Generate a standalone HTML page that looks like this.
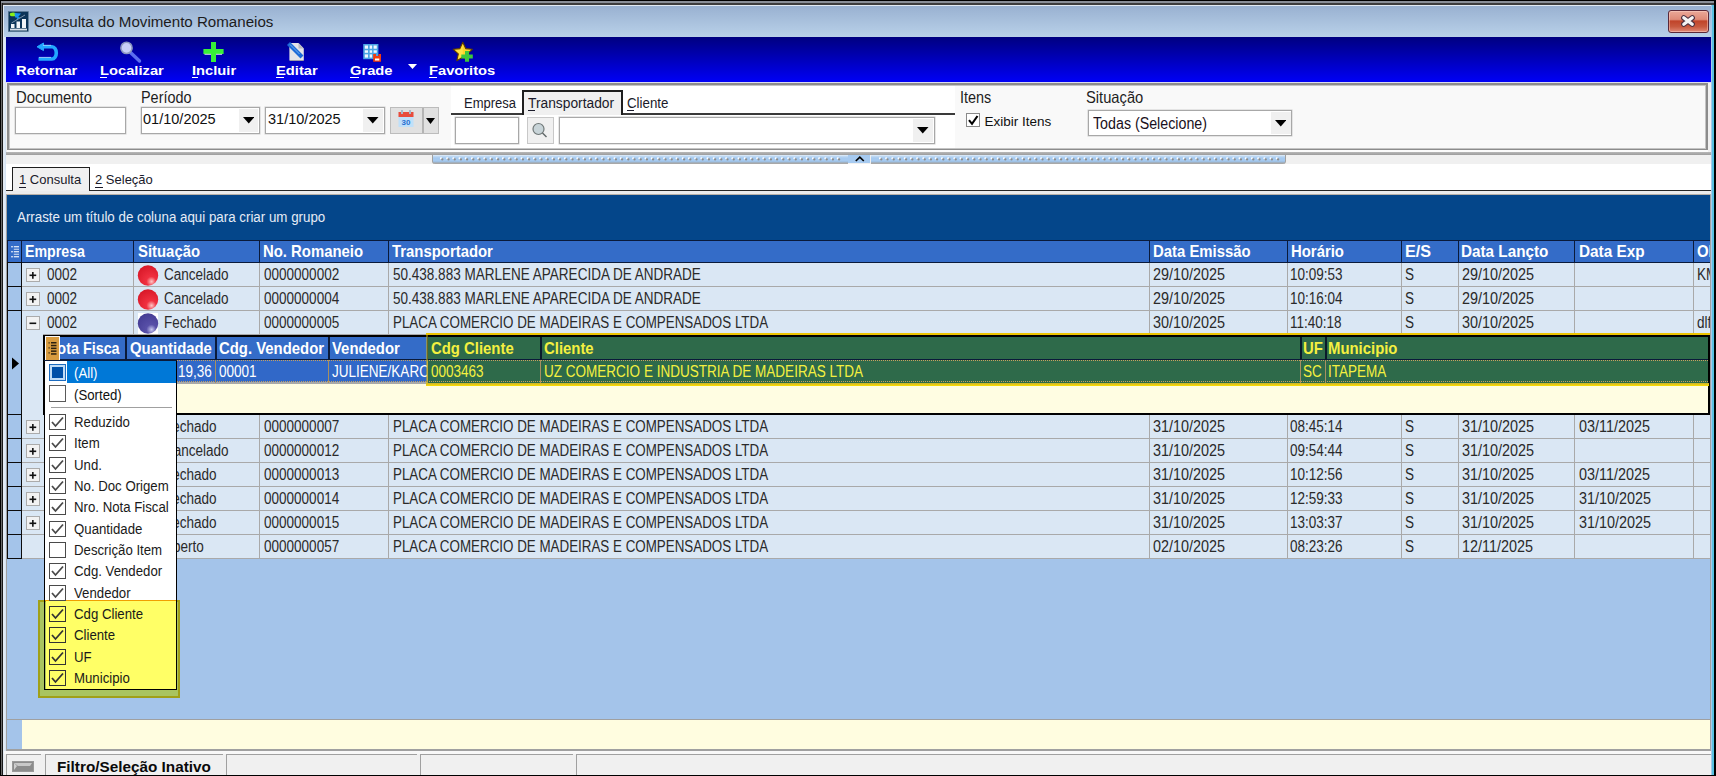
<!DOCTYPE html><html><head><meta charset="utf-8"><style>
*{margin:0;padding:0;box-sizing:border-box}
html,body{width:1716px;height:776px;overflow:hidden;background:#000}
body{position:relative;font-family:"Liberation Sans",sans-serif}
body div{position:absolute}
.t{line-height:20px;height:20px;white-space:nowrap;transform-origin:0 0}
.clip{overflow:hidden}
</style></head><body><div style="left:0px;top:0px;width:1716px;height:776px;background:#000"></div>
<div style="left:1px;top:1px;width:1713px;height:2px;background:#8a8f98"></div>
<div style="left:1px;top:3px;width:1713px;height:2px;background:#3c3c3c"></div>
<div style="left:1px;top:3px;width:1px;height:772px;background:#6a6a6a"></div>
<div style="left:2px;top:3px;width:1px;height:772px;background:#1a1a1a"></div>
<div style="left:3px;top:5px;width:1708px;height:770px;background:#e2eaf3"></div>
<div style="left:1711px;top:5px;width:1px;height:770px;background:#a8c8e8"></div>
<div style="left:1712px;top:5px;width:2px;height:770px;background:#58c0e0"></div>
<div style="left:4px;top:6px;width:1707px;height:31px;background:linear-gradient(#99b1d1,#b9d1e9)"></div>
<svg style="position:absolute;left:8px;top:11px;" width="21" height="21" viewBox="0 0 21 21"><rect x="0.3" y="0.6" width="20" height="20" fill="#0b3458" stroke="#5a7890" stroke-width="0.6"/><ellipse cx="5.2" cy="3.4" rx="3.4" ry="1.9" fill="#88f018"/><path d="M6.5 2 L13 2.6 L10.2 6 L12.2 6.3 L8.2 9.5 L9.3 6.8 L7.2 6.6 Z" fill="#1890f0"/><line x1="3.5" y1="12" x2="17" y2="4" stroke="#7890a8" stroke-width="1"/><rect x="3" y="13" width="3.5" height="4" fill="#f0f4f8"/><rect x="8.5" y="10.5" width="3.5" height="6.5" fill="#f0f4f8"/><rect x="14" y="8" width="4" height="9" fill="#f0f4f8"/><rect x="2" y="17.6" width="17" height="1.9" fill="#d8e0e8"/></svg>
<div class="t" style="left:34px;top:12px;font-size:15.5px;color:#1c1c1c;transform:scaleX(0.975);">Consulta do Movimento Romaneios</div>
<div style="left:1668px;top:10px;width:41px;height:23px;border:1px solid #5a2838;border-radius:3px;background:linear-gradient(#eaa898 0%,#de8a78 40%,#c0442a 48%,#c85a40 75%,#e08a78 100%);box-shadow:inset 0 0 0 1px rgba(255,220,210,.45)"></div>
<svg style="position:absolute;left:1679px;top:14px;" width="18" height="15" viewBox="0 0 18 15"><path d="M4.8 3.8 L13.2 10.2 M13.2 3.8 L4.8 10.2" stroke="#4a3040" stroke-width="5.4" stroke-linecap="round"/><path d="M4.8 3.8 L13.2 10.2 M13.2 3.8 L4.8 10.2" stroke="#f4f4f4" stroke-width="3.3" stroke-linecap="round"/></svg>
<div style="left:6px;top:37px;width:1705px;height:45px;background:linear-gradient(#000080,#0000f6)"></div>
<div style="left:6px;top:82px;width:1705px;height:1px;background:#dcdcf0"></div>
<div style="left:4px;top:83px;width:1707px;height:692px;background:#f0f0f0"></div>
<div style="left:4px;top:37px;width:2px;height:738px;background:linear-gradient(90deg,#e8eef6,#cfe0f2)"></div>
<div class="t" style="left:15.5px;top:61px;font-size:13.5px;font-weight:bold;color:#fff;transform:scaleX(1.09);">Retornar</div>
<div class="t" style="left:99.5px;top:61px;font-size:13.5px;font-weight:bold;color:#fff;transform:scaleX(1.09);">Localizar</div>
<div style="left:100px;top:77px;width:7px;height:1px;background:#fff"></div>
<div class="t" style="left:191.5px;top:61px;font-size:13.5px;font-weight:bold;color:#fff;transform:scaleX(1.09);">Incluir</div>
<div style="left:192px;top:77px;width:6px;height:1px;background:#fff"></div>
<div class="t" style="left:275.5px;top:61px;font-size:13.5px;font-weight:bold;color:#fff;transform:scaleX(1.09);">Editar</div>
<div style="left:276px;top:77px;width:8px;height:1px;background:#fff"></div>
<div class="t" style="left:349.5px;top:61px;font-size:13.5px;font-weight:bold;color:#fff;transform:scaleX(1.09);">Grade</div>
<div style="left:350px;top:77px;width:9px;height:1px;background:#fff"></div>
<div class="t" style="left:429px;top:61px;font-size:13.5px;font-weight:bold;color:#fff;transform:scaleX(1.09);">Favoritos</div>
<div style="left:429px;top:77px;width:8px;height:1px;background:#fff"></div>
<svg style="position:absolute;left:30px;top:38px;" width="32" height="26" viewBox="0 0 32 26"><path d="M12.5 8.8 H22 A4.3 6.1 0 0 1 22 21 H8.5" fill="none" stroke="#22a8ff" stroke-width="3.6"/><path d="M7 8.8 L13.5 5 L13.5 12.6 Z" fill="#22a8ff" stroke="#22a8ff" stroke-width="1" stroke-linejoin="round"/><path d="M13 7.3 H21" stroke="#c8e4ff" stroke-width="0.9" opacity=".8"/><path d="M9 19.4 H21" stroke="#c8e4ff" stroke-width="0.9" opacity=".8"/></svg>
<svg style="position:absolute;left:110px;top:38px;" width="34" height="26" viewBox="0 0 34 26"><line x1="20.5" y1="14.5" x2="29.5" y2="23" stroke="#5c6ef0" stroke-width="3.4" stroke-linecap="round"/><circle cx="16.5" cy="9.9" r="5.6" fill="#c8d0f8" stroke="#8c98c0" stroke-width="1.6"/></svg>
<svg style="position:absolute;left:194px;top:38px;" width="32" height="26" viewBox="0 0 32 26"><path d="M17 4 H22 V11 H29.6 V16.1 H22 V24 H17 V16.1 H9.4 V11 H17 Z" fill="#38f038"/><path d="M10.5 16.3 H17 M22 16.3 H28" stroke="#d8e0f0" stroke-width="1.3" opacity=".8"/></svg>
<svg style="position:absolute;left:280px;top:38px;" width="32" height="26" viewBox="0 0 32 26"><path d="M9.4 5 H18.5 L23.8 10.5 V22 H9.4 Z" fill="#e4e4e8"/><path d="M18.5 5 V10.5 H23.8 Z" fill="#b8b8c0"/><path d="M9.5 22 H23.8 V23 H9.5Z" fill="#9a9aa8"/><line x1="10" y1="7" x2="20.5" y2="17.5" stroke="#1c6ad8" stroke-width="4.2" stroke-linecap="square"/><line x1="10" y1="6.5" x2="19.5" y2="16" stroke="#70b0f0" stroke-width="1" /></svg>
<svg style="position:absolute;left:356px;top:38px;" width="32" height="26" viewBox="0 0 32 26"><rect x="7.2" y="6" width="15.2" height="15.2" fill="#4aa4e4"/><g fill="#f0f8ff"><rect x="8.8" y="7.5" width="3.2" height="3.2"/><rect x="13.7" y="7.5" width="2.4" height="3.2"/><rect x="17.6" y="7.5" width="3.2" height="3.2"/><rect x="8.8" y="12.3" width="3.2" height="2.5"/><rect x="13.7" y="12.3" width="2.4" height="2.5"/><rect x="17.6" y="12.3" width="3.2" height="2.5"/><rect x="8.8" y="16.4" width="3.2" height="3.2"/><rect x="13.7" y="16.4" width="2.4" height="3.2"/></g><path d="M17.2 16 H20 V18 H22.5 V16 H25 V23.8 H17.2 Z" fill="#f43c0c"/><rect x="19" y="20.5" width="4.3" height="2" fill="#fff"/></svg>
<svg style="position:absolute;left:408px;top:64px;" width="10" height="7" viewBox="0 0 10 7"><path d="M0 0 H9 L4.5 5 Z" fill="#fff"/></svg>
<svg style="position:absolute;left:444px;top:38px;" width="34" height="26" viewBox="0 0 34 26"><path d="M18.8 4.2 L21.7 10.6 L28.4 11.3 L23.3 15.9 L24.8 22.7 L18.8 19.3 L12.8 22.7 L14.3 15.9 L9.2 11.3 L15.9 10.6 Z" fill="#ffd428" stroke="#5a3a00" stroke-width="1.1" stroke-linejoin="round"/><path d="M18.8 6.5 L16.5 11.8 L11.5 12.3 L15.3 15.7 L14.2 20.8 L18.8 18 Z" fill="#fff060" opacity=".5"/><path d="M21 13 H25 V16.4 H28.8 V20.4 H25 V23.8 H21 V20.4 H17.3 V16.4 H21 Z" fill="#3cc83c"/></svg>
<div style="left:7px;top:83px;width:1701px;height:68px;background:#f9f9f9;border:2px solid #8c8c8c;box-shadow:inset 0 0 0 1px #c4c4c4"></div>
<div style="left:7px;top:150px;width:1701px;height:2px;background:#fbfbfb"></div>
<div style="left:6px;top:152px;width:1705px;height:3px;background:linear-gradient(#b8b8b8,#9c9c9c)"></div>
<div style="left:451px;top:86px;width:504px;height:62px;background:#fff"></div>
<div class="t" style="left:15.5px;top:87px;font-size:16.5px;color:#1e1e1e;transform:scaleX(0.9);">Documento</div>
<div class="t" style="left:140.5px;top:87px;font-size:16.5px;color:#1e1e1e;transform:scaleX(0.874);">Período</div>
<div class="t" style="left:960px;top:87px;font-size:16.5px;color:#1e1e1e;transform:scaleX(0.874);">Itens</div>
<div class="t" style="left:1085.5px;top:87px;font-size:16.5px;color:#1e1e1e;transform:scaleX(0.892);">Situação</div>
<div style="left:15px;top:107px;width:111px;height:27px;background:#fff;border:1px solid #a8a8a8;box-shadow:0 0 0 0.5px #d0d0d0"></div>
<div style="left:141px;top:107px;width:119px;height:27px;background:#fff;border:1px solid #a8a8a8;box-shadow:0 0 0 0.5px #d0d0d0"></div>
<div style="left:239px;top:109px;width:19px;height:23px;background:#f0f0f0"></div>
<svg style="position:absolute;left:242.75px;top:117.05px;" width="11.5" height="6.5" viewBox="0 0 11.5 6.5"><path d="M0 0 H11.5 L5.75 6.5 Z" fill="#000"/></svg>
<div class="t" style="left:142.7px;top:109px;font-size:15.5px;color:#101010;transform:scaleX(0.937);">01/10/2025</div>
<div style="left:265px;top:107px;width:120px;height:27px;background:#fff;border:1px solid #a8a8a8;box-shadow:0 0 0 0.5px #d0d0d0"></div>
<div style="left:363px;top:109px;width:20px;height:23px;background:#f0f0f0"></div>
<svg style="position:absolute;left:367.25px;top:117.05px;" width="11.5" height="6.5" viewBox="0 0 11.5 6.5"><path d="M0 0 H11.5 L5.75 6.5 Z" fill="#000"/></svg>
<div class="t" style="left:268px;top:109px;font-size:15.5px;color:#101010;transform:scaleX(0.937);">31/10/2025</div>
<div style="left:390px;top:107px;width:49px;height:27px;background:#e1e1e1;border:1px solid #bcbcbc"></div>
<div style="left:422px;top:108px;width:2px;height:25px;background:#b4b4b4"></div>
<svg style="position:absolute;left:398px;top:110px;" width="17" height="19" viewBox="0 0 17 19"><rect x="0.5" y="2" width="15" height="5" fill="#e84c3c"/><rect x="0.5" y="7" width="15" height="10" fill="#bfe0fa"/><rect x="3" y="0" width="2" height="4" fill="#a8b8c8"/><rect x="11" y="0" width="2" height="4" fill="#a8b8c8"/><text x="8" y="15" font-family="Liberation Sans" font-weight="bold" font-size="8" fill="#2a70d0" text-anchor="middle">30</text></svg>
<svg style="position:absolute;left:426.0px;top:118.0px;" width="9" height="6" viewBox="0 0 9 6"><path d="M0 0 H9 L4.5 6 Z" fill="#000"/></svg>
<div style="left:451px;top:113px;width:504px;height:2px;background:#3a3a3a"></div>
<div style="left:522px;top:90px;width:101px;height:25px;background:#f0f0f0;border:2px solid #1e1e1e;border-bottom:none"></div>
<div class="t" style="left:463.5px;top:93px;font-size:14px;color:#1a1a2a;transform:scaleX(0.93);">Empresa</div>
<div class="t" style="left:528px;top:93px;font-size:14px;color:#1a1a2a;transform:scaleX(0.985);">Transportador</div>
<div style="left:528px;top:110px;width:7px;height:1px;background:#1a1a2a"></div>
<div class="t" style="left:627px;top:93px;font-size:14px;color:#1a1a2a;transform:scaleX(0.95);">Cliente</div>
<div style="left:627px;top:110px;width:7px;height:1px;background:#1a1a2a"></div>
<div style="left:455px;top:117px;width:64px;height:27px;background:#fff;border:1px solid #a8a8a8;box-shadow:0 0 0 0.5px #d0d0d0"></div>
<div style="left:527px;top:117px;width:27px;height:27px;background:#f0f0f0;border:1px solid #c8c8c8"></div>
<svg style="position:absolute;left:529px;top:120px;" width="22" height="22" viewBox="0 0 22 22"><circle cx="9.5" cy="9" r="5.5" fill="#c8d4d8" stroke="#707878" stroke-width="1.2"/><line x1="13.5" y1="13" x2="17.5" y2="17" stroke="#606868" stroke-width="1.5"/></svg>
<div style="left:559px;top:117px;width:376px;height:27px;background:#fff;border:1px solid #a8a8a8;box-shadow:0 0 0 0.5px #d0d0d0"></div>
<div style="left:913px;top:119px;width:20px;height:23px;background:#f0f0f0"></div>
<svg style="position:absolute;left:917.0px;top:127.25px;" width="11.5" height="6.5" viewBox="0 0 11.5 6.5"><path d="M0 0 H11.5 L5.75 6.5 Z" fill="#000"/></svg>
<div style="left:966px;top:113px;width:14px;height:14px;background:#fff;border:1px solid #8a8a8a"></div>
<svg style="position:absolute;left:966px;top:113px;" width="14" height="14" viewBox="0 0 14 14"><path d="M3 7.2 L6 10.8 L11.5 3" fill="none" stroke="#000" stroke-width="2.1"/></svg>
<div class="t" style="left:984.5px;top:112px;font-size:13.5px;color:#101010;">Exibir Itens</div>
<div style="left:1088px;top:110px;width:204px;height:26px;background:#fff;border:1px solid #a8a8a8;box-shadow:0 0 0 0.5px #d0d0d0"></div>
<div style="left:1271px;top:112px;width:20px;height:22px;background:#f0f0f0"></div>
<svg style="position:absolute;left:1274.85px;top:120.05px;" width="11.5" height="6.5" viewBox="0 0 11.5 6.5"><path d="M0 0 H11.5 L5.75 6.5 Z" fill="#000"/></svg>
<div class="t" style="left:1093px;top:114px;font-size:16px;color:#1a1020;transform:scaleX(0.89);">Todas (Selecione)</div>
<div style="left:432px;top:152px;width:854px;height:3px;background:linear-gradient(#b8b8b8,#9c9c9c)"></div>
<div style="left:432px;top:155px;width:416px;height:9px;background:linear-gradient(#eaf2fa 0,#c4dcf4 1px,#a6caf0 3px,#a6caf0 6px,#98b8d8 7px,#a8a8a8 8px);border-left:1px solid #a0a0a0;border-radius:0 0 0 3px"></div>
<svg style="position:absolute;left:432px;top:155px;" width="416" height="9" viewBox="0 0 416 9"><circle cx="9.0" cy="3.3" r="1.1" fill="#fff"/><circle cx="10.3" cy="4.4" r="1.15" fill="#8c8c8c"/><circle cx="15.2" cy="3.3" r="1.1" fill="#fff"/><circle cx="16.5" cy="4.4" r="1.15" fill="#8c8c8c"/><circle cx="21.4" cy="3.3" r="1.1" fill="#fff"/><circle cx="22.7" cy="4.4" r="1.15" fill="#8c8c8c"/><circle cx="27.6" cy="3.3" r="1.1" fill="#fff"/><circle cx="28.9" cy="4.4" r="1.15" fill="#8c8c8c"/><circle cx="33.8" cy="3.3" r="1.1" fill="#fff"/><circle cx="35.1" cy="4.4" r="1.15" fill="#8c8c8c"/><circle cx="40.0" cy="3.3" r="1.1" fill="#fff"/><circle cx="41.3" cy="4.4" r="1.15" fill="#8c8c8c"/><circle cx="46.2" cy="3.3" r="1.1" fill="#fff"/><circle cx="47.5" cy="4.4" r="1.15" fill="#8c8c8c"/><circle cx="52.4" cy="3.3" r="1.1" fill="#fff"/><circle cx="53.7" cy="4.4" r="1.15" fill="#8c8c8c"/><circle cx="58.6" cy="3.3" r="1.1" fill="#fff"/><circle cx="59.9" cy="4.4" r="1.15" fill="#8c8c8c"/><circle cx="64.8" cy="3.3" r="1.1" fill="#fff"/><circle cx="66.1" cy="4.4" r="1.15" fill="#8c8c8c"/><circle cx="71.0" cy="3.3" r="1.1" fill="#fff"/><circle cx="72.3" cy="4.4" r="1.15" fill="#8c8c8c"/><circle cx="77.2" cy="3.3" r="1.1" fill="#fff"/><circle cx="78.5" cy="4.4" r="1.15" fill="#8c8c8c"/><circle cx="83.4" cy="3.3" r="1.1" fill="#fff"/><circle cx="84.7" cy="4.4" r="1.15" fill="#8c8c8c"/><circle cx="89.6" cy="3.3" r="1.1" fill="#fff"/><circle cx="90.9" cy="4.4" r="1.15" fill="#8c8c8c"/><circle cx="95.8" cy="3.3" r="1.1" fill="#fff"/><circle cx="97.1" cy="4.4" r="1.15" fill="#8c8c8c"/><circle cx="102.0" cy="3.3" r="1.1" fill="#fff"/><circle cx="103.3" cy="4.4" r="1.15" fill="#8c8c8c"/><circle cx="108.2" cy="3.3" r="1.1" fill="#fff"/><circle cx="109.5" cy="4.4" r="1.15" fill="#8c8c8c"/><circle cx="114.4" cy="3.3" r="1.1" fill="#fff"/><circle cx="115.7" cy="4.4" r="1.15" fill="#8c8c8c"/><circle cx="120.6" cy="3.3" r="1.1" fill="#fff"/><circle cx="121.9" cy="4.4" r="1.15" fill="#8c8c8c"/><circle cx="126.8" cy="3.3" r="1.1" fill="#fff"/><circle cx="128.1" cy="4.4" r="1.15" fill="#8c8c8c"/><circle cx="133.0" cy="3.3" r="1.1" fill="#fff"/><circle cx="134.3" cy="4.4" r="1.15" fill="#8c8c8c"/><circle cx="139.2" cy="3.3" r="1.1" fill="#fff"/><circle cx="140.5" cy="4.4" r="1.15" fill="#8c8c8c"/><circle cx="145.4" cy="3.3" r="1.1" fill="#fff"/><circle cx="146.7" cy="4.4" r="1.15" fill="#8c8c8c"/><circle cx="151.6" cy="3.3" r="1.1" fill="#fff"/><circle cx="152.9" cy="4.4" r="1.15" fill="#8c8c8c"/><circle cx="157.8" cy="3.3" r="1.1" fill="#fff"/><circle cx="159.1" cy="4.4" r="1.15" fill="#8c8c8c"/><circle cx="164.0" cy="3.3" r="1.1" fill="#fff"/><circle cx="165.3" cy="4.4" r="1.15" fill="#8c8c8c"/><circle cx="170.2" cy="3.3" r="1.1" fill="#fff"/><circle cx="171.5" cy="4.4" r="1.15" fill="#8c8c8c"/><circle cx="176.4" cy="3.3" r="1.1" fill="#fff"/><circle cx="177.7" cy="4.4" r="1.15" fill="#8c8c8c"/><circle cx="182.6" cy="3.3" r="1.1" fill="#fff"/><circle cx="183.9" cy="4.4" r="1.15" fill="#8c8c8c"/><circle cx="188.8" cy="3.3" r="1.1" fill="#fff"/><circle cx="190.1" cy="4.4" r="1.15" fill="#8c8c8c"/><circle cx="195.0" cy="3.3" r="1.1" fill="#fff"/><circle cx="196.3" cy="4.4" r="1.15" fill="#8c8c8c"/><circle cx="201.2" cy="3.3" r="1.1" fill="#fff"/><circle cx="202.5" cy="4.4" r="1.15" fill="#8c8c8c"/><circle cx="207.4" cy="3.3" r="1.1" fill="#fff"/><circle cx="208.7" cy="4.4" r="1.15" fill="#8c8c8c"/><circle cx="213.6" cy="3.3" r="1.1" fill="#fff"/><circle cx="214.9" cy="4.4" r="1.15" fill="#8c8c8c"/><circle cx="219.8" cy="3.3" r="1.1" fill="#fff"/><circle cx="221.1" cy="4.4" r="1.15" fill="#8c8c8c"/><circle cx="226.0" cy="3.3" r="1.1" fill="#fff"/><circle cx="227.3" cy="4.4" r="1.15" fill="#8c8c8c"/><circle cx="232.2" cy="3.3" r="1.1" fill="#fff"/><circle cx="233.5" cy="4.4" r="1.15" fill="#8c8c8c"/><circle cx="238.4" cy="3.3" r="1.1" fill="#fff"/><circle cx="239.7" cy="4.4" r="1.15" fill="#8c8c8c"/><circle cx="244.6" cy="3.3" r="1.1" fill="#fff"/><circle cx="245.9" cy="4.4" r="1.15" fill="#8c8c8c"/><circle cx="250.8" cy="3.3" r="1.1" fill="#fff"/><circle cx="252.1" cy="4.4" r="1.15" fill="#8c8c8c"/><circle cx="257.0" cy="3.3" r="1.1" fill="#fff"/><circle cx="258.3" cy="4.4" r="1.15" fill="#8c8c8c"/><circle cx="263.2" cy="3.3" r="1.1" fill="#fff"/><circle cx="264.5" cy="4.4" r="1.15" fill="#8c8c8c"/><circle cx="269.4" cy="3.3" r="1.1" fill="#fff"/><circle cx="270.7" cy="4.4" r="1.15" fill="#8c8c8c"/><circle cx="275.6" cy="3.3" r="1.1" fill="#fff"/><circle cx="276.9" cy="4.4" r="1.15" fill="#8c8c8c"/><circle cx="281.8" cy="3.3" r="1.1" fill="#fff"/><circle cx="283.1" cy="4.4" r="1.15" fill="#8c8c8c"/><circle cx="288.0" cy="3.3" r="1.1" fill="#fff"/><circle cx="289.3" cy="4.4" r="1.15" fill="#8c8c8c"/><circle cx="294.2" cy="3.3" r="1.1" fill="#fff"/><circle cx="295.5" cy="4.4" r="1.15" fill="#8c8c8c"/><circle cx="300.4" cy="3.3" r="1.1" fill="#fff"/><circle cx="301.7" cy="4.4" r="1.15" fill="#8c8c8c"/><circle cx="306.6" cy="3.3" r="1.1" fill="#fff"/><circle cx="307.9" cy="4.4" r="1.15" fill="#8c8c8c"/><circle cx="312.8" cy="3.3" r="1.1" fill="#fff"/><circle cx="314.1" cy="4.4" r="1.15" fill="#8c8c8c"/><circle cx="319.0" cy="3.3" r="1.1" fill="#fff"/><circle cx="320.3" cy="4.4" r="1.15" fill="#8c8c8c"/><circle cx="325.2" cy="3.3" r="1.1" fill="#fff"/><circle cx="326.5" cy="4.4" r="1.15" fill="#8c8c8c"/><circle cx="331.4" cy="3.3" r="1.1" fill="#fff"/><circle cx="332.7" cy="4.4" r="1.15" fill="#8c8c8c"/><circle cx="337.6" cy="3.3" r="1.1" fill="#fff"/><circle cx="338.9" cy="4.4" r="1.15" fill="#8c8c8c"/><circle cx="343.8" cy="3.3" r="1.1" fill="#fff"/><circle cx="345.1" cy="4.4" r="1.15" fill="#8c8c8c"/><circle cx="350.0" cy="3.3" r="1.1" fill="#fff"/><circle cx="351.3" cy="4.4" r="1.15" fill="#8c8c8c"/><circle cx="356.2" cy="3.3" r="1.1" fill="#fff"/><circle cx="357.5" cy="4.4" r="1.15" fill="#8c8c8c"/><circle cx="362.4" cy="3.3" r="1.1" fill="#fff"/><circle cx="363.7" cy="4.4" r="1.15" fill="#8c8c8c"/><circle cx="368.6" cy="3.3" r="1.1" fill="#fff"/><circle cx="369.9" cy="4.4" r="1.15" fill="#8c8c8c"/><circle cx="374.8" cy="3.3" r="1.1" fill="#fff"/><circle cx="376.1" cy="4.4" r="1.15" fill="#8c8c8c"/><circle cx="381.0" cy="3.3" r="1.1" fill="#fff"/><circle cx="382.3" cy="4.4" r="1.15" fill="#8c8c8c"/><circle cx="387.2" cy="3.3" r="1.1" fill="#fff"/><circle cx="388.5" cy="4.4" r="1.15" fill="#8c8c8c"/><circle cx="393.4" cy="3.3" r="1.1" fill="#fff"/><circle cx="394.7" cy="4.4" r="1.15" fill="#8c8c8c"/><circle cx="399.6" cy="3.3" r="1.1" fill="#fff"/><circle cx="400.9" cy="4.4" r="1.15" fill="#8c8c8c"/><circle cx="405.8" cy="3.3" r="1.1" fill="#fff"/><circle cx="407.1" cy="4.4" r="1.15" fill="#8c8c8c"/></svg>
<div style="left:848px;top:155px;width:22px;height:8px;background:#a6caf0"></div>
<svg style="position:absolute;left:854px;top:155px;" width="12" height="8" viewBox="0 0 12 8"><path d="M1.8 6 L5.8 2.2 L9.8 6" fill="none" stroke="#000" stroke-width="1.7"/></svg>
<div style="left:871px;top:155px;width:415px;height:9px;background:linear-gradient(#eaf2fa 0,#c4dcf4 1px,#a6caf0 3px,#a6caf0 6px,#98b8d8 7px,#a8a8a8 8px);border-right:1px solid #a0a0a0;border-radius:0 0 3px 0"></div>
<svg style="position:absolute;left:871px;top:155px;" width="415" height="9" viewBox="0 0 415 9"><circle cx="9.0" cy="3.3" r="1.1" fill="#fff"/><circle cx="10.3" cy="4.4" r="1.15" fill="#8c8c8c"/><circle cx="15.2" cy="3.3" r="1.1" fill="#fff"/><circle cx="16.5" cy="4.4" r="1.15" fill="#8c8c8c"/><circle cx="21.4" cy="3.3" r="1.1" fill="#fff"/><circle cx="22.7" cy="4.4" r="1.15" fill="#8c8c8c"/><circle cx="27.6" cy="3.3" r="1.1" fill="#fff"/><circle cx="28.9" cy="4.4" r="1.15" fill="#8c8c8c"/><circle cx="33.8" cy="3.3" r="1.1" fill="#fff"/><circle cx="35.1" cy="4.4" r="1.15" fill="#8c8c8c"/><circle cx="40.0" cy="3.3" r="1.1" fill="#fff"/><circle cx="41.3" cy="4.4" r="1.15" fill="#8c8c8c"/><circle cx="46.2" cy="3.3" r="1.1" fill="#fff"/><circle cx="47.5" cy="4.4" r="1.15" fill="#8c8c8c"/><circle cx="52.4" cy="3.3" r="1.1" fill="#fff"/><circle cx="53.7" cy="4.4" r="1.15" fill="#8c8c8c"/><circle cx="58.6" cy="3.3" r="1.1" fill="#fff"/><circle cx="59.9" cy="4.4" r="1.15" fill="#8c8c8c"/><circle cx="64.8" cy="3.3" r="1.1" fill="#fff"/><circle cx="66.1" cy="4.4" r="1.15" fill="#8c8c8c"/><circle cx="71.0" cy="3.3" r="1.1" fill="#fff"/><circle cx="72.3" cy="4.4" r="1.15" fill="#8c8c8c"/><circle cx="77.2" cy="3.3" r="1.1" fill="#fff"/><circle cx="78.5" cy="4.4" r="1.15" fill="#8c8c8c"/><circle cx="83.4" cy="3.3" r="1.1" fill="#fff"/><circle cx="84.7" cy="4.4" r="1.15" fill="#8c8c8c"/><circle cx="89.6" cy="3.3" r="1.1" fill="#fff"/><circle cx="90.9" cy="4.4" r="1.15" fill="#8c8c8c"/><circle cx="95.8" cy="3.3" r="1.1" fill="#fff"/><circle cx="97.1" cy="4.4" r="1.15" fill="#8c8c8c"/><circle cx="102.0" cy="3.3" r="1.1" fill="#fff"/><circle cx="103.3" cy="4.4" r="1.15" fill="#8c8c8c"/><circle cx="108.2" cy="3.3" r="1.1" fill="#fff"/><circle cx="109.5" cy="4.4" r="1.15" fill="#8c8c8c"/><circle cx="114.4" cy="3.3" r="1.1" fill="#fff"/><circle cx="115.7" cy="4.4" r="1.15" fill="#8c8c8c"/><circle cx="120.6" cy="3.3" r="1.1" fill="#fff"/><circle cx="121.9" cy="4.4" r="1.15" fill="#8c8c8c"/><circle cx="126.8" cy="3.3" r="1.1" fill="#fff"/><circle cx="128.1" cy="4.4" r="1.15" fill="#8c8c8c"/><circle cx="133.0" cy="3.3" r="1.1" fill="#fff"/><circle cx="134.3" cy="4.4" r="1.15" fill="#8c8c8c"/><circle cx="139.2" cy="3.3" r="1.1" fill="#fff"/><circle cx="140.5" cy="4.4" r="1.15" fill="#8c8c8c"/><circle cx="145.4" cy="3.3" r="1.1" fill="#fff"/><circle cx="146.7" cy="4.4" r="1.15" fill="#8c8c8c"/><circle cx="151.6" cy="3.3" r="1.1" fill="#fff"/><circle cx="152.9" cy="4.4" r="1.15" fill="#8c8c8c"/><circle cx="157.8" cy="3.3" r="1.1" fill="#fff"/><circle cx="159.1" cy="4.4" r="1.15" fill="#8c8c8c"/><circle cx="164.0" cy="3.3" r="1.1" fill="#fff"/><circle cx="165.3" cy="4.4" r="1.15" fill="#8c8c8c"/><circle cx="170.2" cy="3.3" r="1.1" fill="#fff"/><circle cx="171.5" cy="4.4" r="1.15" fill="#8c8c8c"/><circle cx="176.4" cy="3.3" r="1.1" fill="#fff"/><circle cx="177.7" cy="4.4" r="1.15" fill="#8c8c8c"/><circle cx="182.6" cy="3.3" r="1.1" fill="#fff"/><circle cx="183.9" cy="4.4" r="1.15" fill="#8c8c8c"/><circle cx="188.8" cy="3.3" r="1.1" fill="#fff"/><circle cx="190.1" cy="4.4" r="1.15" fill="#8c8c8c"/><circle cx="195.0" cy="3.3" r="1.1" fill="#fff"/><circle cx="196.3" cy="4.4" r="1.15" fill="#8c8c8c"/><circle cx="201.2" cy="3.3" r="1.1" fill="#fff"/><circle cx="202.5" cy="4.4" r="1.15" fill="#8c8c8c"/><circle cx="207.4" cy="3.3" r="1.1" fill="#fff"/><circle cx="208.7" cy="4.4" r="1.15" fill="#8c8c8c"/><circle cx="213.6" cy="3.3" r="1.1" fill="#fff"/><circle cx="214.9" cy="4.4" r="1.15" fill="#8c8c8c"/><circle cx="219.8" cy="3.3" r="1.1" fill="#fff"/><circle cx="221.1" cy="4.4" r="1.15" fill="#8c8c8c"/><circle cx="226.0" cy="3.3" r="1.1" fill="#fff"/><circle cx="227.3" cy="4.4" r="1.15" fill="#8c8c8c"/><circle cx="232.2" cy="3.3" r="1.1" fill="#fff"/><circle cx="233.5" cy="4.4" r="1.15" fill="#8c8c8c"/><circle cx="238.4" cy="3.3" r="1.1" fill="#fff"/><circle cx="239.7" cy="4.4" r="1.15" fill="#8c8c8c"/><circle cx="244.6" cy="3.3" r="1.1" fill="#fff"/><circle cx="245.9" cy="4.4" r="1.15" fill="#8c8c8c"/><circle cx="250.8" cy="3.3" r="1.1" fill="#fff"/><circle cx="252.1" cy="4.4" r="1.15" fill="#8c8c8c"/><circle cx="257.0" cy="3.3" r="1.1" fill="#fff"/><circle cx="258.3" cy="4.4" r="1.15" fill="#8c8c8c"/><circle cx="263.2" cy="3.3" r="1.1" fill="#fff"/><circle cx="264.5" cy="4.4" r="1.15" fill="#8c8c8c"/><circle cx="269.4" cy="3.3" r="1.1" fill="#fff"/><circle cx="270.7" cy="4.4" r="1.15" fill="#8c8c8c"/><circle cx="275.6" cy="3.3" r="1.1" fill="#fff"/><circle cx="276.9" cy="4.4" r="1.15" fill="#8c8c8c"/><circle cx="281.8" cy="3.3" r="1.1" fill="#fff"/><circle cx="283.1" cy="4.4" r="1.15" fill="#8c8c8c"/><circle cx="288.0" cy="3.3" r="1.1" fill="#fff"/><circle cx="289.3" cy="4.4" r="1.15" fill="#8c8c8c"/><circle cx="294.2" cy="3.3" r="1.1" fill="#fff"/><circle cx="295.5" cy="4.4" r="1.15" fill="#8c8c8c"/><circle cx="300.4" cy="3.3" r="1.1" fill="#fff"/><circle cx="301.7" cy="4.4" r="1.15" fill="#8c8c8c"/><circle cx="306.6" cy="3.3" r="1.1" fill="#fff"/><circle cx="307.9" cy="4.4" r="1.15" fill="#8c8c8c"/><circle cx="312.8" cy="3.3" r="1.1" fill="#fff"/><circle cx="314.1" cy="4.4" r="1.15" fill="#8c8c8c"/><circle cx="319.0" cy="3.3" r="1.1" fill="#fff"/><circle cx="320.3" cy="4.4" r="1.15" fill="#8c8c8c"/><circle cx="325.2" cy="3.3" r="1.1" fill="#fff"/><circle cx="326.5" cy="4.4" r="1.15" fill="#8c8c8c"/><circle cx="331.4" cy="3.3" r="1.1" fill="#fff"/><circle cx="332.7" cy="4.4" r="1.15" fill="#8c8c8c"/><circle cx="337.6" cy="3.3" r="1.1" fill="#fff"/><circle cx="338.9" cy="4.4" r="1.15" fill="#8c8c8c"/><circle cx="343.8" cy="3.3" r="1.1" fill="#fff"/><circle cx="345.1" cy="4.4" r="1.15" fill="#8c8c8c"/><circle cx="350.0" cy="3.3" r="1.1" fill="#fff"/><circle cx="351.3" cy="4.4" r="1.15" fill="#8c8c8c"/><circle cx="356.2" cy="3.3" r="1.1" fill="#fff"/><circle cx="357.5" cy="4.4" r="1.15" fill="#8c8c8c"/><circle cx="362.4" cy="3.3" r="1.1" fill="#fff"/><circle cx="363.7" cy="4.4" r="1.15" fill="#8c8c8c"/><circle cx="368.6" cy="3.3" r="1.1" fill="#fff"/><circle cx="369.9" cy="4.4" r="1.15" fill="#8c8c8c"/><circle cx="374.8" cy="3.3" r="1.1" fill="#fff"/><circle cx="376.1" cy="4.4" r="1.15" fill="#8c8c8c"/><circle cx="381.0" cy="3.3" r="1.1" fill="#fff"/><circle cx="382.3" cy="4.4" r="1.15" fill="#8c8c8c"/><circle cx="387.2" cy="3.3" r="1.1" fill="#fff"/><circle cx="388.5" cy="4.4" r="1.15" fill="#8c8c8c"/><circle cx="393.4" cy="3.3" r="1.1" fill="#fff"/><circle cx="394.7" cy="4.4" r="1.15" fill="#8c8c8c"/><circle cx="399.6" cy="3.3" r="1.1" fill="#fff"/><circle cx="400.9" cy="4.4" r="1.15" fill="#8c8c8c"/><circle cx="405.8" cy="3.3" r="1.1" fill="#fff"/><circle cx="407.1" cy="4.4" r="1.15" fill="#8c8c8c"/></svg>
<div style="left:6px;top:164px;width:1705px;height:27px;background:#fff"></div>
<div style="left:6px;top:190px;width:1705px;height:1.5px;background:#262626"></div>
<div style="left:12px;top:167px;width:78px;height:24px;background:#f0f0f0;border:1px solid #1e1e1e;border-bottom:none"></div>
<div class="t" style="left:19px;top:170px;font-size:13px;color:#1a1a2a;">1 Consulta</div>
<div style="left:18.5px;top:187px;width:7.5px;height:1.3px;background:#1a1a2a"></div>
<div class="t" style="left:95px;top:170px;font-size:13px;color:#1a1a2a;">2 Seleção</div>
<div style="left:95px;top:187px;width:7.5px;height:1.3px;background:#1a1a2a"></div>
<div style="left:6px;top:191px;width:1705px;height:4px;background:linear-gradient(#ececec 0,#ececec 3px,#b8b0a8 3px)"></div>
<div style="left:6px;top:195px;width:1705px;height:556px;background:#a4c4ea"></div>
<div style="left:6px;top:195px;width:1px;height:556px;background:#a0a0a0"></div>
<div style="left:1710px;top:195px;width:1px;height:556px;background:#a0a0a0"></div>
<div style="left:7px;top:195px;width:1703px;height:45px;background:#04468a"></div>
<div class="t" style="left:17px;top:207px;font-size:15.5px;color:#e6ecf6;transform:scaleX(0.86);">Arraste um título de coluna aqui para criar um grupo</div>
<div style="left:7px;top:240px;width:1703px;height:23px;background:#346cc8;border-top:1px solid #0a1a3a;border-bottom:1px solid #0a1a3a"></div>
<div style="left:7px;top:240px;width:1px;height:23px;background:#0a1a3a"></div>
<svg style="position:absolute;left:10.5px;top:245.5px;" width="10" height="12" viewBox="0 0 10 12"><rect x="0.3" y="0.0" width="1.4" height="1.4" fill="#fff"/><rect x="2.8" y="0.2" width="5.2" height="1.1" fill="#fff" opacity="1"/><rect x="2.8" y="2.7" width="5.2" height="1.1" fill="#fff" opacity="0.75"/><rect x="0.3" y="5.0" width="1.4" height="1.4" fill="#fff"/><rect x="2.8" y="5.2" width="5.2" height="1.1" fill="#fff" opacity="1"/><rect x="2.8" y="7.7" width="5.2" height="1.1" fill="#fff" opacity="0.75"/><rect x="0.3" y="10.0" width="1.4" height="1.4" fill="#fff"/><rect x="2.8" y="10.2" width="5.2" height="1.1" fill="#fff" opacity="1"/></svg>
<div style="left:21px;top:240px;width:1px;height:23px;background:#0a1a3a"></div>
<div style="left:133px;top:240px;width:1px;height:23px;background:#0a1a3a"></div>
<div style="left:259px;top:240px;width:1px;height:23px;background:#0a1a3a"></div>
<div style="left:388px;top:240px;width:1px;height:23px;background:#0a1a3a"></div>
<div style="left:1149px;top:240px;width:1px;height:23px;background:#0a1a3a"></div>
<div style="left:1287px;top:240px;width:1px;height:23px;background:#0a1a3a"></div>
<div style="left:1401px;top:240px;width:1px;height:23px;background:#0a1a3a"></div>
<div style="left:1458px;top:240px;width:1px;height:23px;background:#0a1a3a"></div>
<div style="left:1574px;top:240px;width:1px;height:23px;background:#0a1a3a"></div>
<div style="left:1693px;top:240px;width:1px;height:23px;background:#0a1a3a"></div>
<div class="clip" style="left:24px;top:241px;width:109px;height:21px">
<div class="t" style="left:1px;top:0px;font-size:16.5px;font-weight:bold;color:#fff;transform:scaleX(0.861);">Empresa</div>
</div>
<div class="clip" style="left:137px;top:241px;width:122px;height:21px">
<div class="t" style="left:0.5999999999999943px;top:0px;font-size:16.5px;font-weight:bold;color:#fff;transform:scaleX(0.902);">Situação</div>
</div>
<div class="clip" style="left:262px;top:241px;width:126px;height:21px">
<div class="t" style="left:1.1999999999999886px;top:0px;font-size:16.5px;font-weight:bold;color:#fff;transform:scaleX(0.902);">No. Romaneio</div>
</div>
<div class="clip" style="left:391px;top:241px;width:758px;height:21px">
<div class="t" style="left:1px;top:0px;font-size:16.5px;font-weight:bold;color:#fff;transform:scaleX(0.902);">Transportador</div>
</div>
<div class="clip" style="left:1152px;top:241px;width:135px;height:21px">
<div class="t" style="left:1px;top:0px;font-size:16.5px;font-weight:bold;color:#fff;transform:scaleX(0.902);">Data Emissão</div>
</div>
<div class="clip" style="left:1290px;top:241px;width:111px;height:21px">
<div class="t" style="left:1.2999999999999545px;top:0px;font-size:16.5px;font-weight:bold;color:#fff;transform:scaleX(0.902);">Horário</div>
</div>
<div class="clip" style="left:1404px;top:241px;width:54px;height:21px">
<div class="t" style="left:1px;top:0px;font-size:16.5px;font-weight:bold;color:#fff;transform:scaleX(0.98);">E/S</div>
</div>
<div class="clip" style="left:1460px;top:241px;width:114px;height:21px">
<div class="t" style="left:1.400000000000091px;top:0px;font-size:16.5px;font-weight:bold;color:#fff;transform:scaleX(0.925);">Data Lançto</div>
</div>
<div class="clip" style="left:1577px;top:241px;width:116px;height:21px">
<div class="t" style="left:1.5px;top:0px;font-size:16.5px;font-weight:bold;color:#fff;transform:scaleX(0.93);">Data Exp</div>
</div>
<div class="clip" style="left:1696px;top:241px;width:14px;height:21px">
<div class="t" style="left:1px;top:0px;font-size:16.5px;font-weight:bold;color:#fff;transform:scaleX(0.902);">Obs</div>
</div>
<div style="left:22px;top:263px;width:1688px;height:23px;background:#dae7f4"></div>
<div style="left:22px;top:286px;width:1688px;height:1px;background:#a9a9a9"></div>
<div style="left:133px;top:263px;width:1px;height:24px;background:#a9a9a9"></div>
<div style="left:259px;top:263px;width:1px;height:24px;background:#a9a9a9"></div>
<div style="left:388px;top:263px;width:1px;height:24px;background:#a9a9a9"></div>
<div style="left:1149px;top:263px;width:1px;height:24px;background:#a9a9a9"></div>
<div style="left:1287px;top:263px;width:1px;height:24px;background:#a9a9a9"></div>
<div style="left:1401px;top:263px;width:1px;height:24px;background:#a9a9a9"></div>
<div style="left:1458px;top:263px;width:1px;height:24px;background:#a9a9a9"></div>
<div style="left:1574px;top:263px;width:1px;height:24px;background:#a9a9a9"></div>
<div style="left:1693px;top:263px;width:1px;height:24px;background:#a9a9a9"></div>
<div style="left:7px;top:262px;width:15px;height:25px;background:#a4c4ea;border:1px solid #0c0c0c"></div>
<div style="left:26px;top:268px;width:14px;height:14px;background:#f2f2f2;border:1.5px solid #ababab"></div>
<svg style="position:absolute;left:26px;top:268px;" width="14" height="14" viewBox="0 0 14 14"><path d="M3.5 7.3 H10.2" stroke="#111" stroke-width="1.6"/><path d="M6.85 4 V10.7" stroke="#111" stroke-width="1.6"/></svg>
<div class="t" style="left:47px;top:265px;font-size:16px;color:#2a2a2a;transform:scaleX(0.845);">0002</div>
<svg style="position:absolute;left:137px;top:264px;" width="22" height="22" viewBox="0 0 22 22"><defs><radialGradient id="g263" cx="0.62" cy="0.78" r="0.8" fx="0.68" fy="0.8"><stop offset="0" stop-color="#ffc8c8"/><stop offset=".3" stop-color="#f03040"/><stop offset="1" stop-color="#d81828"/></radialGradient></defs><circle cx="11" cy="11.5" r="10.2" fill="url(#g263)"/></svg>
<div class="t" style="left:163.5px;top:265px;font-size:16px;color:#2a2a2a;transform:scaleX(0.845);">Cancelado</div>
<div class="t" style="left:263.5px;top:265px;font-size:16px;color:#2a2a2a;transform:scaleX(0.845);">0000000002</div>
<div class="t" style="left:392.5px;top:265px;font-size:16px;color:#2a2a2a;transform:scaleX(0.845);">50.438.883 MARLENE APARECIDA DE ANDRADE</div>
<div class="t" style="left:1153px;top:265px;font-size:16px;color:#2a2a2a;transform:scaleX(0.9);">29/10/2025</div>
<div class="t" style="left:1290px;top:265px;font-size:16px;color:#2a2a2a;transform:scaleX(0.845);">10:09:53</div>
<div class="t" style="left:1405px;top:265px;font-size:16px;color:#2a2a2a;transform:scaleX(0.845);">S</div>
<div class="t" style="left:1461.5px;top:265px;font-size:16px;color:#2a2a2a;transform:scaleX(0.9);">29/10/2025</div>
<div class="t" style="left:1578.5px;top:265px;font-size:16px;color:#2a2a2a;transform:scaleX(0.9);"></div>
<div class="clip" style="left:1694px;top:263px;width:16px;height:23px">
<div class="t" style="left:3px;top:2px;font-size:16px;color:#2a2a2a;transform:scaleX(0.845);">KM</div>
</div>
<div style="left:22px;top:287px;width:1688px;height:23px;background:#dae7f4"></div>
<div style="left:22px;top:310px;width:1688px;height:1px;background:#a9a9a9"></div>
<div style="left:133px;top:287px;width:1px;height:24px;background:#a9a9a9"></div>
<div style="left:259px;top:287px;width:1px;height:24px;background:#a9a9a9"></div>
<div style="left:388px;top:287px;width:1px;height:24px;background:#a9a9a9"></div>
<div style="left:1149px;top:287px;width:1px;height:24px;background:#a9a9a9"></div>
<div style="left:1287px;top:287px;width:1px;height:24px;background:#a9a9a9"></div>
<div style="left:1401px;top:287px;width:1px;height:24px;background:#a9a9a9"></div>
<div style="left:1458px;top:287px;width:1px;height:24px;background:#a9a9a9"></div>
<div style="left:1574px;top:287px;width:1px;height:24px;background:#a9a9a9"></div>
<div style="left:1693px;top:287px;width:1px;height:24px;background:#a9a9a9"></div>
<div style="left:7px;top:286px;width:15px;height:25px;background:#a4c4ea;border:1px solid #0c0c0c"></div>
<div style="left:26px;top:292px;width:14px;height:14px;background:#f2f2f2;border:1.5px solid #ababab"></div>
<svg style="position:absolute;left:26px;top:292px;" width="14" height="14" viewBox="0 0 14 14"><path d="M3.5 7.3 H10.2" stroke="#111" stroke-width="1.6"/><path d="M6.85 4 V10.7" stroke="#111" stroke-width="1.6"/></svg>
<div class="t" style="left:47px;top:289px;font-size:16px;color:#2a2a2a;transform:scaleX(0.845);">0002</div>
<svg style="position:absolute;left:137px;top:288px;" width="22" height="22" viewBox="0 0 22 22"><defs><radialGradient id="g287" cx="0.62" cy="0.78" r="0.8" fx="0.68" fy="0.8"><stop offset="0" stop-color="#ffc8c8"/><stop offset=".3" stop-color="#f03040"/><stop offset="1" stop-color="#d81828"/></radialGradient></defs><circle cx="11" cy="11.5" r="10.2" fill="url(#g287)"/></svg>
<div class="t" style="left:163.5px;top:289px;font-size:16px;color:#2a2a2a;transform:scaleX(0.845);">Cancelado</div>
<div class="t" style="left:263.5px;top:289px;font-size:16px;color:#2a2a2a;transform:scaleX(0.845);">0000000004</div>
<div class="t" style="left:392.5px;top:289px;font-size:16px;color:#2a2a2a;transform:scaleX(0.845);">50.438.883 MARLENE APARECIDA DE ANDRADE</div>
<div class="t" style="left:1153px;top:289px;font-size:16px;color:#2a2a2a;transform:scaleX(0.9);">29/10/2025</div>
<div class="t" style="left:1290px;top:289px;font-size:16px;color:#2a2a2a;transform:scaleX(0.845);">10:16:04</div>
<div class="t" style="left:1405px;top:289px;font-size:16px;color:#2a2a2a;transform:scaleX(0.845);">S</div>
<div class="t" style="left:1461.5px;top:289px;font-size:16px;color:#2a2a2a;transform:scaleX(0.9);">29/10/2025</div>
<div class="t" style="left:1578.5px;top:289px;font-size:16px;color:#2a2a2a;transform:scaleX(0.9);"></div>
<div style="left:22px;top:311px;width:1688px;height:23px;background:#dae7f4"></div>
<div style="left:43px;top:334px;width:1667px;height:1px;background:#a9a9a9"></div>
<div style="left:133px;top:311px;width:1px;height:24px;background:#a9a9a9"></div>
<div style="left:259px;top:311px;width:1px;height:24px;background:#a9a9a9"></div>
<div style="left:388px;top:311px;width:1px;height:24px;background:#a9a9a9"></div>
<div style="left:1149px;top:311px;width:1px;height:24px;background:#a9a9a9"></div>
<div style="left:1287px;top:311px;width:1px;height:24px;background:#a9a9a9"></div>
<div style="left:1401px;top:311px;width:1px;height:24px;background:#a9a9a9"></div>
<div style="left:1458px;top:311px;width:1px;height:24px;background:#a9a9a9"></div>
<div style="left:1574px;top:311px;width:1px;height:24px;background:#a9a9a9"></div>
<div style="left:1693px;top:311px;width:1px;height:24px;background:#a9a9a9"></div>
<div style="left:7px;top:310px;width:15px;height:25px;background:#a4c4ea;border:1px solid #0c0c0c;border-bottom:none;height:105px"></div>
<div style="left:26px;top:316px;width:14px;height:14px;background:#f2f2f2;border:1.5px solid #ababab"></div>
<svg style="position:absolute;left:26px;top:316px;" width="14" height="14" viewBox="0 0 14 14"><path d="M3.5 7.3 H10.2" stroke="#111" stroke-width="1.6"/></svg>
<div class="t" style="left:47px;top:313px;font-size:16px;color:#2a2a2a;transform:scaleX(0.845);">0002</div>
<svg style="position:absolute;left:137px;top:312px;" width="22" height="22" viewBox="0 0 22 22"><defs><radialGradient id="g311" cx="0.62" cy="0.78" r="0.8" fx="0.68" fy="0.8"><stop offset="0" stop-color="#c8c8f0"/><stop offset=".3" stop-color="#5850a8"/><stop offset="1" stop-color="#443c94"/></radialGradient></defs><rect x="1" y="1" width="20" height="21" fill="#fff"/><circle cx="11" cy="11.5" r="10.2" fill="url(#g311)"/></svg>
<div class="t" style="left:163.5px;top:313px;font-size:16px;color:#2a2a2a;transform:scaleX(0.845);">Fechado</div>
<div class="t" style="left:263.5px;top:313px;font-size:16px;color:#2a2a2a;transform:scaleX(0.845);">0000000005</div>
<div class="t" style="left:392.5px;top:313px;font-size:16px;color:#2a2a2a;transform:scaleX(0.836);">PLACA COMERCIO DE MADEIRAS E COMPENSADOS LTDA</div>
<div class="t" style="left:1153px;top:313px;font-size:16px;color:#2a2a2a;transform:scaleX(0.9);">30/10/2025</div>
<div class="t" style="left:1290px;top:313px;font-size:16px;color:#2a2a2a;transform:scaleX(0.845);">11:40:18</div>
<div class="t" style="left:1405px;top:313px;font-size:16px;color:#2a2a2a;transform:scaleX(0.845);">S</div>
<div class="t" style="left:1461.5px;top:313px;font-size:16px;color:#2a2a2a;transform:scaleX(0.9);">30/10/2025</div>
<div class="t" style="left:1578.5px;top:313px;font-size:16px;color:#2a2a2a;transform:scaleX(0.9);"></div>
<div class="clip" style="left:1694px;top:311px;width:16px;height:23px">
<div class="t" style="left:3px;top:2px;font-size:16px;color:#2a2a2a;transform:scaleX(0.845);">dlf</div>
</div>
<div style="left:22px;top:415px;width:1688px;height:23px;background:#dae7f4"></div>
<div style="left:22px;top:438px;width:1688px;height:1px;background:#a9a9a9"></div>
<div style="left:133px;top:415px;width:1px;height:24px;background:#a9a9a9"></div>
<div style="left:259px;top:415px;width:1px;height:24px;background:#a9a9a9"></div>
<div style="left:388px;top:415px;width:1px;height:24px;background:#a9a9a9"></div>
<div style="left:1149px;top:415px;width:1px;height:24px;background:#a9a9a9"></div>
<div style="left:1287px;top:415px;width:1px;height:24px;background:#a9a9a9"></div>
<div style="left:1401px;top:415px;width:1px;height:24px;background:#a9a9a9"></div>
<div style="left:1458px;top:415px;width:1px;height:24px;background:#a9a9a9"></div>
<div style="left:1574px;top:415px;width:1px;height:24px;background:#a9a9a9"></div>
<div style="left:1693px;top:415px;width:1px;height:24px;background:#a9a9a9"></div>
<div style="left:7px;top:414px;width:15px;height:25px;background:#a4c4ea;border:1px solid #0c0c0c"></div>
<div style="left:26px;top:420px;width:14px;height:14px;background:#f2f2f2;border:1.5px solid #ababab"></div>
<svg style="position:absolute;left:26px;top:420px;" width="14" height="14" viewBox="0 0 14 14"><path d="M3.5 7.3 H10.2" stroke="#111" stroke-width="1.6"/><path d="M6.85 4 V10.7" stroke="#111" stroke-width="1.6"/></svg>
<div class="t" style="left:47px;top:417px;font-size:16px;color:#2a2a2a;transform:scaleX(0.845);">0002</div>
<svg style="position:absolute;left:137px;top:416px;" width="22" height="22" viewBox="0 0 22 22"><defs><radialGradient id="g415" cx="0.62" cy="0.78" r="0.8" fx="0.68" fy="0.8"><stop offset="0" stop-color="#c8c8f0"/><stop offset=".3" stop-color="#5850a8"/><stop offset="1" stop-color="#443c94"/></radialGradient></defs><rect x="1" y="1" width="20" height="21" fill="#fff"/><circle cx="11" cy="11.5" r="10.2" fill="url(#g415)"/></svg>
<div class="t" style="left:163.5px;top:417px;font-size:16px;color:#2a2a2a;transform:scaleX(0.845);">Fechado</div>
<div class="t" style="left:263.5px;top:417px;font-size:16px;color:#2a2a2a;transform:scaleX(0.845);">0000000007</div>
<div class="t" style="left:392.5px;top:417px;font-size:16px;color:#2a2a2a;transform:scaleX(0.836);">PLACA COMERCIO DE MADEIRAS E COMPENSADOS LTDA</div>
<div class="t" style="left:1153px;top:417px;font-size:16px;color:#2a2a2a;transform:scaleX(0.9);">31/10/2025</div>
<div class="t" style="left:1290px;top:417px;font-size:16px;color:#2a2a2a;transform:scaleX(0.845);">08:45:14</div>
<div class="t" style="left:1405px;top:417px;font-size:16px;color:#2a2a2a;transform:scaleX(0.845);">S</div>
<div class="t" style="left:1461.5px;top:417px;font-size:16px;color:#2a2a2a;transform:scaleX(0.9);">31/10/2025</div>
<div class="t" style="left:1578.5px;top:417px;font-size:16px;color:#2a2a2a;transform:scaleX(0.9);">03/11/2025</div>
<div style="left:22px;top:439px;width:1688px;height:23px;background:#dae7f4"></div>
<div style="left:22px;top:462px;width:1688px;height:1px;background:#a9a9a9"></div>
<div style="left:133px;top:439px;width:1px;height:24px;background:#a9a9a9"></div>
<div style="left:259px;top:439px;width:1px;height:24px;background:#a9a9a9"></div>
<div style="left:388px;top:439px;width:1px;height:24px;background:#a9a9a9"></div>
<div style="left:1149px;top:439px;width:1px;height:24px;background:#a9a9a9"></div>
<div style="left:1287px;top:439px;width:1px;height:24px;background:#a9a9a9"></div>
<div style="left:1401px;top:439px;width:1px;height:24px;background:#a9a9a9"></div>
<div style="left:1458px;top:439px;width:1px;height:24px;background:#a9a9a9"></div>
<div style="left:1574px;top:439px;width:1px;height:24px;background:#a9a9a9"></div>
<div style="left:1693px;top:439px;width:1px;height:24px;background:#a9a9a9"></div>
<div style="left:7px;top:438px;width:15px;height:25px;background:#a4c4ea;border:1px solid #0c0c0c"></div>
<div style="left:26px;top:444px;width:14px;height:14px;background:#f2f2f2;border:1.5px solid #ababab"></div>
<svg style="position:absolute;left:26px;top:444px;" width="14" height="14" viewBox="0 0 14 14"><path d="M3.5 7.3 H10.2" stroke="#111" stroke-width="1.6"/><path d="M6.85 4 V10.7" stroke="#111" stroke-width="1.6"/></svg>
<div class="t" style="left:47px;top:441px;font-size:16px;color:#2a2a2a;transform:scaleX(0.845);">0002</div>
<svg style="position:absolute;left:137px;top:440px;" width="22" height="22" viewBox="0 0 22 22"><defs><radialGradient id="g439" cx="0.62" cy="0.78" r="0.8" fx="0.68" fy="0.8"><stop offset="0" stop-color="#ffc8c8"/><stop offset=".3" stop-color="#f03040"/><stop offset="1" stop-color="#d81828"/></radialGradient></defs><circle cx="11" cy="11.5" r="10.2" fill="url(#g439)"/></svg>
<div class="t" style="left:163.5px;top:441px;font-size:16px;color:#2a2a2a;transform:scaleX(0.845);">Cancelado</div>
<div class="t" style="left:263.5px;top:441px;font-size:16px;color:#2a2a2a;transform:scaleX(0.845);">0000000012</div>
<div class="t" style="left:392.5px;top:441px;font-size:16px;color:#2a2a2a;transform:scaleX(0.836);">PLACA COMERCIO DE MADEIRAS E COMPENSADOS LTDA</div>
<div class="t" style="left:1153px;top:441px;font-size:16px;color:#2a2a2a;transform:scaleX(0.9);">31/10/2025</div>
<div class="t" style="left:1290px;top:441px;font-size:16px;color:#2a2a2a;transform:scaleX(0.845);">09:54:44</div>
<div class="t" style="left:1405px;top:441px;font-size:16px;color:#2a2a2a;transform:scaleX(0.845);">S</div>
<div class="t" style="left:1461.5px;top:441px;font-size:16px;color:#2a2a2a;transform:scaleX(0.9);">31/10/2025</div>
<div class="t" style="left:1578.5px;top:441px;font-size:16px;color:#2a2a2a;transform:scaleX(0.9);"></div>
<div style="left:22px;top:463px;width:1688px;height:23px;background:#dae7f4"></div>
<div style="left:22px;top:486px;width:1688px;height:1px;background:#a9a9a9"></div>
<div style="left:133px;top:463px;width:1px;height:24px;background:#a9a9a9"></div>
<div style="left:259px;top:463px;width:1px;height:24px;background:#a9a9a9"></div>
<div style="left:388px;top:463px;width:1px;height:24px;background:#a9a9a9"></div>
<div style="left:1149px;top:463px;width:1px;height:24px;background:#a9a9a9"></div>
<div style="left:1287px;top:463px;width:1px;height:24px;background:#a9a9a9"></div>
<div style="left:1401px;top:463px;width:1px;height:24px;background:#a9a9a9"></div>
<div style="left:1458px;top:463px;width:1px;height:24px;background:#a9a9a9"></div>
<div style="left:1574px;top:463px;width:1px;height:24px;background:#a9a9a9"></div>
<div style="left:1693px;top:463px;width:1px;height:24px;background:#a9a9a9"></div>
<div style="left:7px;top:462px;width:15px;height:25px;background:#a4c4ea;border:1px solid #0c0c0c"></div>
<div style="left:26px;top:468px;width:14px;height:14px;background:#f2f2f2;border:1.5px solid #ababab"></div>
<svg style="position:absolute;left:26px;top:468px;" width="14" height="14" viewBox="0 0 14 14"><path d="M3.5 7.3 H10.2" stroke="#111" stroke-width="1.6"/><path d="M6.85 4 V10.7" stroke="#111" stroke-width="1.6"/></svg>
<div class="t" style="left:47px;top:465px;font-size:16px;color:#2a2a2a;transform:scaleX(0.845);">0002</div>
<svg style="position:absolute;left:137px;top:464px;" width="22" height="22" viewBox="0 0 22 22"><defs><radialGradient id="g463" cx="0.62" cy="0.78" r="0.8" fx="0.68" fy="0.8"><stop offset="0" stop-color="#c8c8f0"/><stop offset=".3" stop-color="#5850a8"/><stop offset="1" stop-color="#443c94"/></radialGradient></defs><rect x="1" y="1" width="20" height="21" fill="#fff"/><circle cx="11" cy="11.5" r="10.2" fill="url(#g463)"/></svg>
<div class="t" style="left:163.5px;top:465px;font-size:16px;color:#2a2a2a;transform:scaleX(0.845);">Fechado</div>
<div class="t" style="left:263.5px;top:465px;font-size:16px;color:#2a2a2a;transform:scaleX(0.845);">0000000013</div>
<div class="t" style="left:392.5px;top:465px;font-size:16px;color:#2a2a2a;transform:scaleX(0.836);">PLACA COMERCIO DE MADEIRAS E COMPENSADOS LTDA</div>
<div class="t" style="left:1153px;top:465px;font-size:16px;color:#2a2a2a;transform:scaleX(0.9);">31/10/2025</div>
<div class="t" style="left:1290px;top:465px;font-size:16px;color:#2a2a2a;transform:scaleX(0.845);">10:12:56</div>
<div class="t" style="left:1405px;top:465px;font-size:16px;color:#2a2a2a;transform:scaleX(0.845);">S</div>
<div class="t" style="left:1461.5px;top:465px;font-size:16px;color:#2a2a2a;transform:scaleX(0.9);">31/10/2025</div>
<div class="t" style="left:1578.5px;top:465px;font-size:16px;color:#2a2a2a;transform:scaleX(0.9);">03/11/2025</div>
<div style="left:22px;top:487px;width:1688px;height:23px;background:#dae7f4"></div>
<div style="left:22px;top:510px;width:1688px;height:1px;background:#a9a9a9"></div>
<div style="left:133px;top:487px;width:1px;height:24px;background:#a9a9a9"></div>
<div style="left:259px;top:487px;width:1px;height:24px;background:#a9a9a9"></div>
<div style="left:388px;top:487px;width:1px;height:24px;background:#a9a9a9"></div>
<div style="left:1149px;top:487px;width:1px;height:24px;background:#a9a9a9"></div>
<div style="left:1287px;top:487px;width:1px;height:24px;background:#a9a9a9"></div>
<div style="left:1401px;top:487px;width:1px;height:24px;background:#a9a9a9"></div>
<div style="left:1458px;top:487px;width:1px;height:24px;background:#a9a9a9"></div>
<div style="left:1574px;top:487px;width:1px;height:24px;background:#a9a9a9"></div>
<div style="left:1693px;top:487px;width:1px;height:24px;background:#a9a9a9"></div>
<div style="left:7px;top:486px;width:15px;height:25px;background:#a4c4ea;border:1px solid #0c0c0c"></div>
<div style="left:26px;top:492px;width:14px;height:14px;background:#f2f2f2;border:1.5px solid #ababab"></div>
<svg style="position:absolute;left:26px;top:492px;" width="14" height="14" viewBox="0 0 14 14"><path d="M3.5 7.3 H10.2" stroke="#111" stroke-width="1.6"/><path d="M6.85 4 V10.7" stroke="#111" stroke-width="1.6"/></svg>
<div class="t" style="left:47px;top:489px;font-size:16px;color:#2a2a2a;transform:scaleX(0.845);">0002</div>
<svg style="position:absolute;left:137px;top:488px;" width="22" height="22" viewBox="0 0 22 22"><defs><radialGradient id="g487" cx="0.62" cy="0.78" r="0.8" fx="0.68" fy="0.8"><stop offset="0" stop-color="#c8c8f0"/><stop offset=".3" stop-color="#5850a8"/><stop offset="1" stop-color="#443c94"/></radialGradient></defs><rect x="1" y="1" width="20" height="21" fill="#fff"/><circle cx="11" cy="11.5" r="10.2" fill="url(#g487)"/></svg>
<div class="t" style="left:163.5px;top:489px;font-size:16px;color:#2a2a2a;transform:scaleX(0.845);">Fechado</div>
<div class="t" style="left:263.5px;top:489px;font-size:16px;color:#2a2a2a;transform:scaleX(0.845);">0000000014</div>
<div class="t" style="left:392.5px;top:489px;font-size:16px;color:#2a2a2a;transform:scaleX(0.836);">PLACA COMERCIO DE MADEIRAS E COMPENSADOS LTDA</div>
<div class="t" style="left:1153px;top:489px;font-size:16px;color:#2a2a2a;transform:scaleX(0.9);">31/10/2025</div>
<div class="t" style="left:1290px;top:489px;font-size:16px;color:#2a2a2a;transform:scaleX(0.845);">12:59:33</div>
<div class="t" style="left:1405px;top:489px;font-size:16px;color:#2a2a2a;transform:scaleX(0.845);">S</div>
<div class="t" style="left:1461.5px;top:489px;font-size:16px;color:#2a2a2a;transform:scaleX(0.9);">31/10/2025</div>
<div class="t" style="left:1578.5px;top:489px;font-size:16px;color:#2a2a2a;transform:scaleX(0.9);">31/10/2025</div>
<div style="left:22px;top:511px;width:1688px;height:23px;background:#dae7f4"></div>
<div style="left:22px;top:534px;width:1688px;height:1px;background:#a9a9a9"></div>
<div style="left:133px;top:511px;width:1px;height:24px;background:#a9a9a9"></div>
<div style="left:259px;top:511px;width:1px;height:24px;background:#a9a9a9"></div>
<div style="left:388px;top:511px;width:1px;height:24px;background:#a9a9a9"></div>
<div style="left:1149px;top:511px;width:1px;height:24px;background:#a9a9a9"></div>
<div style="left:1287px;top:511px;width:1px;height:24px;background:#a9a9a9"></div>
<div style="left:1401px;top:511px;width:1px;height:24px;background:#a9a9a9"></div>
<div style="left:1458px;top:511px;width:1px;height:24px;background:#a9a9a9"></div>
<div style="left:1574px;top:511px;width:1px;height:24px;background:#a9a9a9"></div>
<div style="left:1693px;top:511px;width:1px;height:24px;background:#a9a9a9"></div>
<div style="left:7px;top:510px;width:15px;height:25px;background:#a4c4ea;border:1px solid #0c0c0c"></div>
<div style="left:26px;top:516px;width:14px;height:14px;background:#f2f2f2;border:1.5px solid #ababab"></div>
<svg style="position:absolute;left:26px;top:516px;" width="14" height="14" viewBox="0 0 14 14"><path d="M3.5 7.3 H10.2" stroke="#111" stroke-width="1.6"/><path d="M6.85 4 V10.7" stroke="#111" stroke-width="1.6"/></svg>
<div class="t" style="left:47px;top:513px;font-size:16px;color:#2a2a2a;transform:scaleX(0.845);">0002</div>
<svg style="position:absolute;left:137px;top:512px;" width="22" height="22" viewBox="0 0 22 22"><defs><radialGradient id="g511" cx="0.62" cy="0.78" r="0.8" fx="0.68" fy="0.8"><stop offset="0" stop-color="#c8c8f0"/><stop offset=".3" stop-color="#5850a8"/><stop offset="1" stop-color="#443c94"/></radialGradient></defs><rect x="1" y="1" width="20" height="21" fill="#fff"/><circle cx="11" cy="11.5" r="10.2" fill="url(#g511)"/></svg>
<div class="t" style="left:163.5px;top:513px;font-size:16px;color:#2a2a2a;transform:scaleX(0.845);">Fechado</div>
<div class="t" style="left:263.5px;top:513px;font-size:16px;color:#2a2a2a;transform:scaleX(0.845);">0000000015</div>
<div class="t" style="left:392.5px;top:513px;font-size:16px;color:#2a2a2a;transform:scaleX(0.836);">PLACA COMERCIO DE MADEIRAS E COMPENSADOS LTDA</div>
<div class="t" style="left:1153px;top:513px;font-size:16px;color:#2a2a2a;transform:scaleX(0.9);">31/10/2025</div>
<div class="t" style="left:1290px;top:513px;font-size:16px;color:#2a2a2a;transform:scaleX(0.845);">13:03:37</div>
<div class="t" style="left:1405px;top:513px;font-size:16px;color:#2a2a2a;transform:scaleX(0.845);">S</div>
<div class="t" style="left:1461.5px;top:513px;font-size:16px;color:#2a2a2a;transform:scaleX(0.9);">31/10/2025</div>
<div class="t" style="left:1578.5px;top:513px;font-size:16px;color:#2a2a2a;transform:scaleX(0.9);">31/10/2025</div>
<div style="left:22px;top:535px;width:1688px;height:23px;background:#dae7f4"></div>
<div style="left:22px;top:558px;width:1688px;height:1px;background:#a9a9a9"></div>
<div style="left:133px;top:535px;width:1px;height:24px;background:#a9a9a9"></div>
<div style="left:259px;top:535px;width:1px;height:24px;background:#a9a9a9"></div>
<div style="left:388px;top:535px;width:1px;height:24px;background:#a9a9a9"></div>
<div style="left:1149px;top:535px;width:1px;height:24px;background:#a9a9a9"></div>
<div style="left:1287px;top:535px;width:1px;height:24px;background:#a9a9a9"></div>
<div style="left:1401px;top:535px;width:1px;height:24px;background:#a9a9a9"></div>
<div style="left:1458px;top:535px;width:1px;height:24px;background:#a9a9a9"></div>
<div style="left:1574px;top:535px;width:1px;height:24px;background:#a9a9a9"></div>
<div style="left:1693px;top:535px;width:1px;height:24px;background:#a9a9a9"></div>
<div style="left:7px;top:534px;width:15px;height:25px;background:#a4c4ea;border:1px solid #0c0c0c"></div>
<div class="t" style="left:47px;top:537px;font-size:16px;color:#2a2a2a;transform:scaleX(0.845);">0002</div>
<svg style="position:absolute;left:137px;top:536px;" width="22" height="22" viewBox="0 0 22 22"><defs><radialGradient id="g535" cx="0.62" cy="0.78" r="0.8" fx="0.68" fy="0.8"><stop offset="0" stop-color="#c0f0c0"/><stop offset=".3" stop-color="#30b030"/><stop offset="1" stop-color="#209020"/></radialGradient></defs><circle cx="11" cy="11.5" r="10.2" fill="url(#g535)"/></svg>
<div class="t" style="left:163.5px;top:537px;font-size:16px;color:#2a2a2a;transform:scaleX(0.845);">Aberto</div>
<div class="t" style="left:263.5px;top:537px;font-size:16px;color:#2a2a2a;transform:scaleX(0.845);">0000000057</div>
<div class="t" style="left:392.5px;top:537px;font-size:16px;color:#2a2a2a;transform:scaleX(0.836);">PLACA COMERCIO DE MADEIRAS E COMPENSADOS LTDA</div>
<div class="t" style="left:1153px;top:537px;font-size:16px;color:#2a2a2a;transform:scaleX(0.9);">02/10/2025</div>
<div class="t" style="left:1290px;top:537px;font-size:16px;color:#2a2a2a;transform:scaleX(0.845);">08:23:26</div>
<div class="t" style="left:1405px;top:537px;font-size:16px;color:#2a2a2a;transform:scaleX(0.845);">S</div>
<div class="t" style="left:1461.5px;top:537px;font-size:16px;color:#2a2a2a;transform:scaleX(0.9);">12/11/2025</div>
<div class="t" style="left:1578.5px;top:537px;font-size:16px;color:#2a2a2a;transform:scaleX(0.9);"></div>
<div style="left:22px;top:334px;width:21px;height:81px;background:#dae7f4"></div>
<div style="left:7px;top:414px;width:15px;height:1px;background:#0c0c0c"></div>
<svg style="position:absolute;left:11px;top:357px;" width="9" height="13" viewBox="0 0 9 13"><path d="M1 0.5 L8 6.5 L1 12.5 Z" fill="#000"/></svg>
<div style="left:43px;top:335px;width:1667px;height:80px;background:#fffde2;border:2px solid #000;border-left-width:2px;border-right-width:2px"></div>
<div style="left:45px;top:337px;width:1663px;height:23px;background:#346cc8;border-bottom:1px solid #0a1a3a"></div>
<div style="left:125px;top:337px;width:2px;height:23px;background:#0a1a3a"></div>
<div style="left:215px;top:337px;width:2px;height:23px;background:#0a1a3a"></div>
<div style="left:328px;top:337px;width:2px;height:23px;background:#0a1a3a"></div>
<div style="left:427px;top:337px;width:2px;height:23px;background:#0a1a3a"></div>
<div style="left:540px;top:337px;width:2px;height:23px;background:#0a1a3a"></div>
<div style="left:1300px;top:337px;width:2px;height:23px;background:#0a1a3a"></div>
<div style="left:1325px;top:337px;width:2px;height:23px;background:#0a1a3a"></div>
<div style="left:428px;top:337px;width:1280px;height:23px;background:#2e6a4a;border-bottom:1px solid #0a1a3a"></div>
<div style="left:540px;top:337px;width:2px;height:23px;background:#0a1a2a"></div>
<div style="left:1300px;top:337px;width:2px;height:23px;background:#0a1a2a"></div>
<div style="left:1325px;top:337px;width:2px;height:23px;background:#0a1a2a"></div>
<div class="clip" style="left:60px;top:337px;width:60px;height:22px">
<div class="t" style="left:-13px;top:1px;font-size:16.5px;font-weight:bold;color:#fff;transform:scaleX(0.87);">Nota Fiscal</div>
</div>
<div class="clip" style="left:129px;top:337px;width:86px;height:22px">
<div class="t" style="left:1px;top:1px;font-size:16.5px;font-weight:bold;color:#fff;transform:scaleX(0.902);">Quantidade</div>
</div>
<div class="clip" style="left:218px;top:337px;width:110px;height:22px">
<div class="t" style="left:1px;top:1px;font-size:16.5px;font-weight:bold;color:#fff;transform:scaleX(0.902);">Cdg. Vendedor</div>
</div>
<div class="clip" style="left:331px;top:337px;width:96px;height:22px">
<div class="t" style="left:1px;top:1px;font-size:16.5px;font-weight:bold;color:#fff;transform:scaleX(0.902);">Vendedor</div>
</div>
<div class="clip" style="left:430px;top:337px;width:110px;height:22px">
<div class="t" style="left:1px;top:1px;font-size:16.5px;font-weight:bold;color:#f4f040;transform:scaleX(0.902);">Cdg Cliente</div>
</div>
<div class="clip" style="left:543px;top:337px;width:757px;height:22px">
<div class="t" style="left:1px;top:1px;font-size:16.5px;font-weight:bold;color:#f4f040;transform:scaleX(0.902);">Cliente</div>
</div>
<div class="clip" style="left:1302px;top:337px;width:23px;height:22px">
<div class="t" style="left:1px;top:1px;font-size:16.5px;font-weight:bold;color:#f4f040;transform:scaleX(0.902);">UF</div>
</div>
<div class="clip" style="left:1327px;top:337px;width:381px;height:22px">
<div class="t" style="left:1px;top:1px;font-size:16.5px;font-weight:bold;color:#f4f040;transform:scaleX(0.902);">Municipio</div>
</div>
<div style="left:45px;top:336px;width:15px;height:25px;background:#d89c40;border:1.5px solid #fafafa"></div>
<svg style="position:absolute;left:47px;top:341px;" width="11" height="16" viewBox="0 0 11 16"><g fill="#2a2010"><rect x="1.5" y="1.3" width="1.2" height="1.2"/><rect x="1.5" y="6.3" width="1.2" height="1.2"/><rect x="1.5" y="11.3" width="1.2" height="1.2"/><rect x="4" y="1" width="5.5" height="1.5"/><rect x="4" y="3.8" width="5.5" height="1.5"/><rect x="4" y="6.6" width="5.5" height="1.5"/><rect x="4" y="9.4" width="5.5" height="1.5"/><rect x="4" y="12.2" width="5.5" height="1.5"/></g></svg>
<div style="left:45px;top:360px;width:382px;height:23px;background:#3168c8"></div>
<div style="left:427px;top:360px;width:1281px;height:23px;background:#2e6a4a"></div>
<div style="left:45px;top:360px;width:1663px;height:1px;background:repeating-linear-gradient(90deg,#c8a060 0 1px,transparent 1px 2px)"></div>
<div style="left:45px;top:381px;width:1663px;height:1px;background:repeating-linear-gradient(90deg,#c8a060 0 1px,transparent 1px 2px)"></div>
<div style="left:45px;top:382px;width:382px;height:2px;background:#a8a8a8"></div>
<div style="left:125px;top:360px;width:1px;height:23px;background:#a89060"></div>
<div style="left:215px;top:360px;width:1px;height:23px;background:#a89060"></div>
<div style="left:328px;top:360px;width:1px;height:23px;background:#a89060"></div>
<div style="left:427px;top:360px;width:1px;height:23px;background:#a89060"></div>
<div style="left:540px;top:360px;width:1px;height:23px;background:#a89060"></div>
<div style="left:1300px;top:360px;width:1px;height:23px;background:#a89060"></div>
<div style="left:1325px;top:360px;width:1px;height:23px;background:#a89060"></div>
<div class="clip" style="left:59px;top:360px;width:66px;height:23px">
<div class="t" style="left:1px;top:2px;font-size:16px;color:#fff;transform:scaleX(0.845);">1.000,00</div>
</div>
<div class="clip" style="left:177px;top:360px;width:38px;height:23px">
<div class="t" style="left:1px;top:2px;font-size:16px;color:#fff;transform:scaleX(0.845);">19,36</div>
</div>
<div class="clip" style="left:218px;top:360px;width:110px;height:23px">
<div class="t" style="left:1px;top:2px;font-size:16px;color:#fff;transform:scaleX(0.845);">00001</div>
</div>
<div class="clip" style="left:331px;top:360px;width:96px;height:23px">
<div class="t" style="left:1px;top:2px;font-size:16px;color:#fff;transform:scaleX(0.845);">JULIENE/KAROLINE</div>
</div>
<div class="clip" style="left:430px;top:360px;width:110px;height:23px">
<div class="t" style="left:1px;top:2px;font-size:16px;color:#f4f040;transform:scaleX(0.845);">0003463</div>
</div>
<div class="clip" style="left:543px;top:360px;width:757px;height:23px">
<div class="t" style="left:1px;top:2px;font-size:16px;color:#f4f040;transform:scaleX(0.845);">UZ COMERCIO E INDUSTRIA DE MADEIRAS LTDA</div>
</div>
<div class="clip" style="left:1302px;top:360px;width:23px;height:23px">
<div class="t" style="left:1px;top:2px;font-size:16px;color:#f4f040;transform:scaleX(0.845);">SC</div>
</div>
<div class="clip" style="left:1327px;top:360px;width:381px;height:23px">
<div class="t" style="left:1px;top:2px;font-size:16px;color:#f4f040;transform:scaleX(0.845);">ITAPEMA</div>
</div>
<div style="left:426px;top:333px;width:1284px;height:2px;background:#ecc400"></div>
<div style="left:426px;top:383px;width:1283px;height:3px;background:linear-gradient(#c8b030,#ffe000)"></div>
<div style="left:426px;top:335px;width:2px;height:49px;background:rgba(230,200,0,.45)"></div>
<div style="left:7px;top:719px;width:1703px;height:1px;background:#a0a0a0"></div>
<div style="left:8px;top:720px;width:14px;height:29px;background:#a4c4ea"></div>
<div style="left:22px;top:720px;width:1688px;height:29px;background:#fffde0"></div>
<div style="left:6px;top:749px;width:1705px;height:2px;background:#a0a0a0"></div>
<div style="left:4px;top:751px;width:1707px;height:3px;background:#f8f8f8"></div>
<div style="left:4px;top:754px;width:1707px;height:21px;background:#f0f0f0"></div>
<div style="left:6px;top:754px;width:35px;height:21px;border-top:1px solid #a0a0a0;border-left:1px solid #a0a0a0"></div>
<div style="left:45px;top:754px;width:178px;height:21px;border-top:1px solid #a0a0a0;border-left:1px solid #a0a0a0"></div>
<div style="left:226px;top:754px;width:191px;height:21px;border-top:1px solid #a0a0a0;border-left:1px solid #a0a0a0"></div>
<div style="left:420px;top:754px;width:153px;height:21px;border-top:1px solid #a0a0a0;border-left:1px solid #a0a0a0"></div>
<div style="left:576px;top:754px;width:1135px;height:21px;border-top:1px solid #a0a0a0;border-left:1px solid #a0a0a0"></div>
<svg style="position:absolute;left:12px;top:761px;" width="22" height="11" viewBox="0 0 22 11"><rect x="0.5" y="0.5" width="21" height="10" fill="#8c8c8c" stroke="#9a9a9a"/><path d="M2 2 L20 2 L18 5 L6 5 Z" fill="#c8c8c8"/><path d="M2 2 L5 5 L2 9 Z" fill="#d0d0d0"/></svg>
<div class="t" style="left:57px;top:757px;font-size:15px;font-weight:bold;color:#0a0a0a;transform:scaleX(1.02);">Filtro/Seleção Inativo</div>
<div style="left:44px;top:360px;width:133px;height:330px;background:#fff;border:1px solid #000;border-top:none"></div>
<div style="left:44px;top:360px;width:133px;height:1px;background:#0a1a3a"></div>
<div style="left:67px;top:361px;width:109px;height:22px;background:#0078d7"></div>
<div style="left:49px;top:364px;width:17px;height:17px;background:#c0dcf6;border:1px solid #1c6cc0"></div>
<div style="left:52px;top:367px;width:11px;height:11px;background:#0050a8"></div>
<div class="t" style="left:73.5px;top:363px;font-size:15.2px;color:#fff;transform:scaleX(0.87);">(All)</div>
<div style="left:49px;top:385px;width:17px;height:17px;background:#fff;border:1.5px solid #5a5a5a"></div>
<div class="t" style="left:73.5px;top:385px;font-size:15.2px;color:#111;transform:scaleX(0.87);">(Sorted)</div>
<div style="left:51px;top:407px;width:121px;height:1px;background:#a0a0a0"></div>
<div style="left:38px;top:600px;width:142px;height:98px;background:#a9c460;border:2px solid #a0a018"></div>
<div style="left:46px;top:601px;width:130px;height:88px;background:#ffff66"></div>
<div style="left:45px;top:600px;width:132px;height:1px;background:#f0a000"></div>
<div style="left:176px;top:600px;width:1px;height:89px;background:#000"></div>
<div style="left:44px;top:600px;width:1px;height:89px;background:#000"></div>
<div style="left:44px;top:689px;width:133px;height:1px;background:#000"></div>
<div style="left:49px;top:414px;width:17px;height:16px;background:transparent;border:1.5px solid #4a4a4a"></div>
<svg style="position:absolute;left:49px;top:414px;" width="17" height="16" viewBox="0 0 17 16"><path d="M3 8 L6.5 12 L14 3.5" fill="none" stroke="#4a4a4a" stroke-width="1.8"/></svg>
<div class="t" style="left:73.5px;top:412px;font-size:15.2px;color:#1a1a1a;transform:scaleX(0.87);">Reduzido</div>
<div style="left:49px;top:435px;width:17px;height:16px;background:transparent;border:1.5px solid #4a4a4a"></div>
<svg style="position:absolute;left:49px;top:435px;" width="17" height="16" viewBox="0 0 17 16"><path d="M3 8 L6.5 12 L14 3.5" fill="none" stroke="#4a4a4a" stroke-width="1.8"/></svg>
<div class="t" style="left:73.5px;top:433px;font-size:15.2px;color:#1a1a1a;transform:scaleX(0.87);">Item</div>
<div style="left:49px;top:457px;width:17px;height:16px;background:transparent;border:1.5px solid #4a4a4a"></div>
<svg style="position:absolute;left:49px;top:457px;" width="17" height="16" viewBox="0 0 17 16"><path d="M3 8 L6.5 12 L14 3.5" fill="none" stroke="#4a4a4a" stroke-width="1.8"/></svg>
<div class="t" style="left:73.5px;top:455px;font-size:15.2px;color:#1a1a1a;transform:scaleX(0.87);">Und.</div>
<div style="left:49px;top:478px;width:17px;height:16px;background:transparent;border:1.5px solid #4a4a4a"></div>
<svg style="position:absolute;left:49px;top:478px;" width="17" height="16" viewBox="0 0 17 16"><path d="M3 8 L6.5 12 L14 3.5" fill="none" stroke="#4a4a4a" stroke-width="1.8"/></svg>
<div class="t" style="left:73.5px;top:476px;font-size:15.2px;color:#1a1a1a;transform:scaleX(0.87);">No. Doc Origem</div>
<div style="left:49px;top:499px;width:17px;height:16px;background:transparent;border:1.5px solid #4a4a4a"></div>
<svg style="position:absolute;left:49px;top:499px;" width="17" height="16" viewBox="0 0 17 16"><path d="M3 8 L6.5 12 L14 3.5" fill="none" stroke="#4a4a4a" stroke-width="1.8"/></svg>
<div class="t" style="left:73.5px;top:497px;font-size:15.2px;color:#1a1a1a;transform:scaleX(0.87);">Nro. Nota Fiscal</div>
<div style="left:49px;top:521px;width:17px;height:16px;background:transparent;border:1.5px solid #4a4a4a"></div>
<svg style="position:absolute;left:49px;top:521px;" width="17" height="16" viewBox="0 0 17 16"><path d="M3 8 L6.5 12 L14 3.5" fill="none" stroke="#4a4a4a" stroke-width="1.8"/></svg>
<div class="t" style="left:73.5px;top:519px;font-size:15.2px;color:#1a1a1a;transform:scaleX(0.87);">Quantidade</div>
<div style="left:49px;top:542px;width:17px;height:16px;background:transparent;border:1.5px solid #4a4a4a"></div>
<div class="t" style="left:73.5px;top:540px;font-size:15.2px;color:#1a1a1a;transform:scaleX(0.87);">Descrição Item</div>
<div style="left:49px;top:563px;width:17px;height:16px;background:transparent;border:1.5px solid #4a4a4a"></div>
<svg style="position:absolute;left:49px;top:563px;" width="17" height="16" viewBox="0 0 17 16"><path d="M3 8 L6.5 12 L14 3.5" fill="none" stroke="#4a4a4a" stroke-width="1.8"/></svg>
<div class="t" style="left:73.5px;top:561px;font-size:15.2px;color:#1a1a1a;transform:scaleX(0.87);">Cdg. Vendedor</div>
<div style="left:49px;top:585px;width:17px;height:16px;background:transparent;border:1.5px solid #4a4a4a"></div>
<svg style="position:absolute;left:49px;top:585px;" width="17" height="16" viewBox="0 0 17 16"><path d="M3 8 L6.5 12 L14 3.5" fill="none" stroke="#4a4a4a" stroke-width="1.8"/></svg>
<div class="t" style="left:73.5px;top:583px;font-size:15.2px;color:#1a1a1a;transform:scaleX(0.87);">Vendedor</div>
<div style="left:49px;top:606px;width:17px;height:16px;background:transparent;border:1.5px solid #333"></div>
<svg style="position:absolute;left:49px;top:606px;" width="17" height="16" viewBox="0 0 17 16"><path d="M3 8 L6.5 12 L14 3.5" fill="none" stroke="#333" stroke-width="1.8"/></svg>
<div class="t" style="left:73.5px;top:604px;font-size:15.2px;color:#1a1a1a;transform:scaleX(0.87);">Cdg Cliente</div>
<div style="left:49px;top:627px;width:17px;height:16px;background:transparent;border:1.5px solid #333"></div>
<svg style="position:absolute;left:49px;top:627px;" width="17" height="16" viewBox="0 0 17 16"><path d="M3 8 L6.5 12 L14 3.5" fill="none" stroke="#333" stroke-width="1.8"/></svg>
<div class="t" style="left:73.5px;top:625px;font-size:15.2px;color:#1a1a1a;transform:scaleX(0.87);">Cliente</div>
<div style="left:49px;top:649px;width:17px;height:16px;background:transparent;border:1.5px solid #333"></div>
<svg style="position:absolute;left:49px;top:649px;" width="17" height="16" viewBox="0 0 17 16"><path d="M3 8 L6.5 12 L14 3.5" fill="none" stroke="#333" stroke-width="1.8"/></svg>
<div class="t" style="left:73.5px;top:647px;font-size:15.2px;color:#1a1a1a;transform:scaleX(0.87);">UF</div>
<div style="left:49px;top:670px;width:17px;height:16px;background:transparent;border:1.5px solid #333"></div>
<svg style="position:absolute;left:49px;top:670px;" width="17" height="16" viewBox="0 0 17 16"><path d="M3 8 L6.5 12 L14 3.5" fill="none" stroke="#333" stroke-width="1.8"/></svg>
<div class="t" style="left:73.5px;top:668px;font-size:15.2px;color:#1a1a1a;transform:scaleX(0.87);">Municipio</div></body></html>
